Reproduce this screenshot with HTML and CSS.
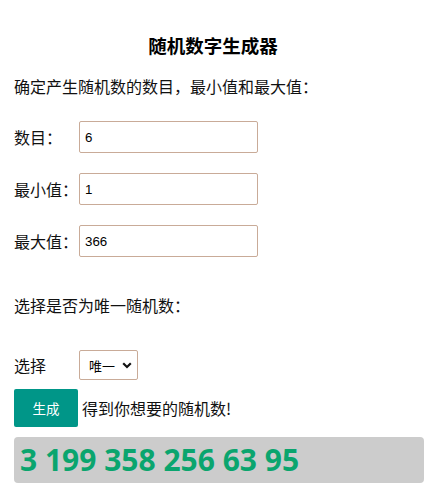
FILE: index.html
```html
<!DOCTYPE html>
<html lang="zh">
<head>
<meta charset="utf-8">
<title>随机数字生成器</title>
<link rel="stylesheet" href="styles.css">
</head>
<body>
<div class="page">
  <h3 class="title">随机数字生成器</h3>
  <p class="intro">确定产生随机数的数目，最小值和最大值：</p>
  <div class="field">
    <label class="label">数目：</label>
    <input class="input" type="text" value="6">
  </div>
  <div class="field">
    <label class="label">最小值：</label>
    <input class="input" type="text" value="1">
  </div>
  <div class="field">
    <label class="label">最大值：</label>
    <input class="input" type="text" value="366">
  </div>
  <p class="intro unique">选择是否为唯一随机数：</p>
  <div class="field select-row">
    <label class="label">选择</label>
    <div class="select">唯一<svg class="chev" width="10" height="7" viewBox="0 0 10 7"><path d="M1.2 1.3 L5 5 L8.8 1.3" fill="none" stroke="#111" stroke-width="2.2"/></svg></div>
  </div>
  <div class="action-row">
    <button class="btn">生成</button>
    <span class="hint">得到你想要的随机数!</span>
  </div>
  <div class="result">3 199 358 256 63 95</div>
</div>
</body>
</html>
```
FILE: styles.css
```css
* { box-sizing: border-box; }
html, body { margin: 0; padding: 0; background: #fff; }
body {
  font-family: "Noto Sans CJK SC", "Noto Sans", sans-serif;
  color: #111;
}
.page {
  padding: 0 5px 0 14px;
  width: 429px;
}
.title {
  margin: 33px 0 0;
  height: 24px;
  line-height: 24px;
  font-size: 18.5px;
  font-weight: bold;
  text-align: center;
  color: #000;
  padding-right: 12px;
}
.intro {
  margin: 17px 0 0;
  height: 24px;
  line-height: 24px;
  font-size: 16px;
}
.field {
  display: flex;
  align-items: center;
  margin-top: 20px;
  height: 32px;
}
.intro + .field { margin-top: 23px; }
.label {
  width: 65px;
  font-size: 16px;
  line-height: 24px;
}
.input {
  width: 179px;
  height: 32px;
  border: 1px solid #c9ab98;
  border-radius: 2px;
  padding: 0 5px;
  font-family: "Liberation Sans", Arial, sans-serif;
  font-size: 13.3px;
  color: #000;
  outline: none;
}
.unique { margin-top: 36px; }
.field.select-row { margin-top: 32px; height: 32px; }
.select {
  width: 59px;
  height: 30px;
  border: 1px solid #c9ab98;
  border-radius: 2px;
  display: flex;
  align-items: center;
  justify-content: space-between;
  padding: 0 5px 0 9px;
  font-size: 13px;
  color: #000;
}
.chev { display: block; }
.action-row {
  display: flex;
  align-items: center;
  margin-top: 8px;
  height: 38px;
}
.btn {
  width: 64px;
  height: 38px;
  border: none;
  border-radius: 2px;
  background: #009688;
  color: #fff;
  font-family: "Noto Sans CJK SC", sans-serif;
  font-size: 13.5px;
  padding: 0;
  margin-right: 4px;
}
.hint {
  font-size: 16px;
  line-height: 24px;
}
.result {
  margin-top: 10px;
  width: 410px;
  height: 46px;
  background: #cccccc;
  border-radius: 4px;
  padding-left: 6px;
  font-family: "Open Sans", "Noto Sans", sans-serif;
  font-weight: bold;
  font-size: 30px;
  line-height: 46px;
  color: #0aa56e;
  white-space: nowrap;
}
```
